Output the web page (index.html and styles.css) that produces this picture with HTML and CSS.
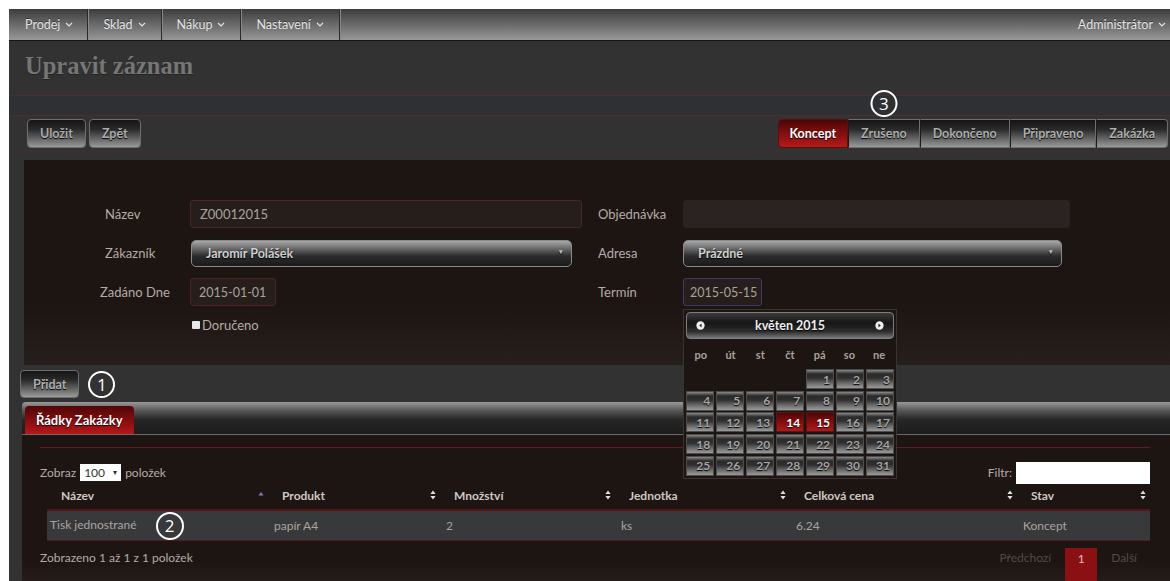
FILE: index.html
```html
<!DOCTYPE html>
<html lang="cs">
<head>
<meta charset="utf-8">
<title>Upravit záznam</title>
<link rel="stylesheet" href="styles.css">
</head>
<body>
<div class="app">
  <nav class="topnav">
    <a class="nav-item">Prodej <svg class="chev" viewBox="0 0 8 5"><path d="M1 1l3 3 3-3"/></svg></a>
    <a class="nav-item">Sklad <svg class="chev" viewBox="0 0 8 5"><path d="M1 1l3 3 3-3"/></svg></a>
    <a class="nav-item">Nákup <svg class="chev" viewBox="0 0 8 5"><path d="M1 1l3 3 3-3"/></svg></a>
    <a class="nav-item">Nastavení <svg class="chev" viewBox="0 0 8 5"><path d="M1 1l3 3 3-3"/></svg></a>
    <a class="nav-item user">Administrátor <svg class="chev" viewBox="0 0 8 5"><path d="M1 1l3 3 3-3"/></svg></a>
  </nav>

  <header class="page-head"><h1>Upravit záznam</h1></header>
  <div class="band"></div>

  <div class="toolbar">
    <div class="btn-group">
      <button class="btn">Uložit</button>
      <button class="btn">Zpět</button>
    </div>
    <div class="status-group">
      <button class="btn seg active">Koncept</button>
      <button class="btn seg">Zrušeno<span class="marker marker-top">3</span></button>
      <button class="btn seg">Dokončeno</button>
      <button class="btn seg">Připraveno</button>
      <button class="btn seg">Zakázka</button>
    </div>
  </div>

  <div class="content">
    <section class="form-panel">
      <div class="form-grid">
        <label class="lbl">Název</label>
        <div class="field wide">Z00012015</div>
        <span></span>
        <label class="lbl">Objednávka</label>
        <div class="field wide plain"></div>

        <label class="lbl">Zákazník</label>
        <div class="select sel-left">Jaromír Polášek<span class="sel-arrow">▾</span></div>
        <span></span>
        <label class="lbl">Adresa</label>
        <div class="select sel-right">Prázdné<span class="sel-arrow">▾</span></div>

        <label class="lbl lbl-wide">Zadáno Dne</label>
        <div class="field date">2015-01-01</div>
        <span></span>
        <label class="lbl">Termín</label>
        <div class="date-wrap">
          <div class="field date focus">2015-05-15<span class="caret"></span></div>
          <div class="datepicker">
            <div class="dp-head">
              <svg class="dp-nav" viewBox="0 0 10 10"><circle cx="5" cy="5" r="4.6"/><path d="M6.2 2.8L3.6 5l2.6 2.2z"/></svg>
              <span>květen 2015</span>
              <svg class="dp-nav" viewBox="0 0 10 10"><circle cx="5" cy="5" r="4.6"/><path d="M3.8 2.8L6.4 5 3.8 7.2z"/></svg>
            </div>
            <div class="dp-days">
              <span>po</span><span>út</span><span>st</span><span>čt</span><span>pá</span><span>so</span><span>ne</span>
            </div>
            <div class="dp-grid">
              <span class="empty"></span><span class="empty"></span><span class="empty"></span><span class="empty"></span>
              <span>1</span><span>2</span><span>3</span>
              <span>4</span><span>5</span><span>6</span><span>7</span><span>8</span><span>9</span><span>10</span>
              <span>11</span><span>12</span><span>13</span><span class="hl">14</span><span class="hl">15</span><span>16</span><span>17</span>
              <span>18</span><span>19</span><span>20</span><span>21</span><span>22</span><span>23</span><span>24</span>
              <span>25</span><span>26</span><span>27</span><span>28</span><span>29</span><span>30</span><span>31</span>
            </div>
          </div>
        </div>

        <span></span>
        <div class="check"><span class="box"></span>Doručeno</div>
      </div>
    </section>

    <div class="add-row">
      <button class="btn">Přidat</button>
      <span class="marker">1</span>
    </div>

    <section class="tabs">
      <div class="tabbar">
        <div class="tab active">Řádky Zakázky</div>
      </div>
      <div class="tab-body">
        <div class="dt-top">
          <div class="dt-length">Zobraz <span class="mini-select">100<span class="mini-arrow">▾</span></span> položek</div>
          <div class="dt-filter">Filtr: <span class="filter-box"></span></div>
        </div>
        <table class="grid">
          <colgroup>
            <col style="width:221px"><col style="width:172px"><col style="width:175px">
            <col style="width:175px"><col style="width:227px"><col style="width:133px">
          </colgroup>
          <thead>
            <tr>
              <th>Název<svg class="sort asc" viewBox="0 0 6 10"><path d="M3 2l2.6 3.4H.4z"/></svg></th>
              <th>Produkt<svg class="sort" viewBox="0 0 6 10"><path d="M3 .6l2.6 3.4H.4zM3 9.4L.4 6h5.2z"/></svg></th>
              <th>Množství<svg class="sort" viewBox="0 0 6 10"><path d="M3 .6l2.6 3.4H.4zM3 9.4L.4 6h5.2z"/></svg></th>
              <th>Jednotka<svg class="sort" viewBox="0 0 6 10"><path d="M3 .6l2.6 3.4H.4zM3 9.4L.4 6h5.2z"/></svg></th>
              <th>Celková cena<svg class="sort" viewBox="0 0 6 10"><path d="M3 .6l2.6 3.4H.4zM3 9.4L.4 6h5.2z"/></svg></th>
              <th>Stav<svg class="sort" viewBox="0 0 6 10"><path d="M3 .6l2.6 3.4H.4zM3 9.4L.4 6h5.2z"/></svg></th>
            </tr>
          </thead>
          <tbody>
            <tr>
              <td>Tisk jednostrané<span class="marker inline">2</span></td>
              <td>papír A4</td>
              <td>2</td>
              <td>ks</td>
              <td>6.24</td>
              <td>Koncept</td>
            </tr>
          </tbody>
        </table>
        <div class="dt-bottom">
          <div class="dt-info">Zobrazeno 1 až 1 z 1 položek</div>
          <div class="pager">
            <span class="pg">Předchozí</span>
            <span class="pg current">1</span>
            <span class="pg">Další</span>
          </div>
        </div>
      </div>
    </section>
  </div>
</div>
</body>
</html>
```

FILE: styles.css
```css
* { box-sizing: border-box; }

html, body {
  margin: 0;
  height: 100%;
  overflow: hidden;
  background: #fff;
}

body {
  padding: 9px 0 0 9px;
  font-family: Lato, "Open Sans", sans-serif;
  font-size: 13px;
  color: #b0aaa6;
}

.app {
  background: #323232;
  min-height: 100%;
}

/* top navigation */
.topnav {
  display: flex;
  height: 32px;
  background: linear-gradient(#3c3c3c, #666 45%, #979797);
  border-bottom: 1px solid #151515;
}

.nav-item {
  display: flex;
  align-items: center;
  gap: 5px;
  padding: 0 15px;
  color: #e4e4e4;
  text-shadow: 0 -1px 0 rgba(0,0,0,.45);
  border-right: 1px solid #2a2a2a;
  box-shadow: 1px 0 0 #8a8a8a;
  font-size: 12.5px;
}
.nav-item:first-child { padding-left: 16px; padding-right: 14px; }
.nav-item.user {
  margin-left: auto;
  border-right: 0;
  box-shadow: none;
  padding-right: 4px;
}

.chev {
  width: 8px;
  height: 5px;
  fill: none;
  stroke: #e4e4e4;
  stroke-width: 1.2;
}

/* page title */
.page-head { height: 54px; }
.page-head h1 {
  margin: 0;
  padding: 11px 0 0 16px;
  font-family: "Liberation Serif", serif;
  font-weight: bold;
  font-size: 24.5px;
  color: #767676;
  text-shadow: 0 1px 0 #222;
}

.band {
  height: 21px;
  background: #2e3033;
  border-top: 1px solid #4a2e32;
  border-bottom: 1px solid #4a2e32;
}

/* action toolbar */
.toolbar {
  display: flex;
  justify-content: space-between;
  align-items: flex-start;
  height: 35px;
  padding: 3px 2px 0 18px;
  border-bottom: 1px solid #452b2e;
}

.btn-group, .status-group { display: flex; }
.btn-group { gap: 3px; }

.btn {
  position: relative;
  height: 29px;
  padding: 0 12px;
  font-family: Lato, sans-serif;
  font-weight: 700;
  font-size: 12.5px;
  color: #adadad;
  text-shadow: 0 1px 1px #000;
  background: linear-gradient(#151515, #2a2a2a 35%, #777 80%, #9a9a9a);
  border: 1px solid #6e6e6e;
  border-radius: 4px;
}

.seg {
  border-radius: 0;
  border-left-color: #1a1a1a;
  padding: 0 12px;
}
.seg:first-child { border-radius: 4px 0 0 4px; border-left-color: #6e6e6e; padding: 0 11px; }
.seg:last-child { border-radius: 0 4px 4px 0; }
.seg.active {
  color: #fff;
  background: linear-gradient(#4a0606, #8a0f10 55%, #b51a1a);
  border-color: #5a1010;
}

/* numbered callouts */
.marker {
  display: inline-flex;
  align-items: center;
  justify-content: center;
  width: 27px;
  height: 27px;
  border: 2.5px solid #fff;
  border-radius: 50%;
  color: #fff;
  font-family: "Open Sans", sans-serif;
  font-weight: 400;
  font-size: 17px;
  line-height: 1;
  text-shadow: none;
}
.marker-top {
  position: absolute;
  left: 50%;
  top: -30px;
  transform: translateX(-50%);
}

.content { padding-left: 13px; }

/* edit form */
.form-panel {
  margin: 9px 0 0 2px;
  padding: 40px 0 32px 79px;
  background: linear-gradient(#1d1512 70%, #271f1b);
}

.form-grid {
  display: grid;
  grid-template-columns: 87px 392px 16px 85px 387px;
  grid-template-rows: 28px 28px 28px 16px;
  row-gap: 11px;
  align-items: center;
}
.form-grid > :nth-child(1),
.form-grid > :nth-child(6) { padding-left: 2px; }
.lbl-wide { margin-left: -3px; }

.lbl { color: #b3aca7; font-size: 13px; white-space: nowrap; }

.field {
  height: 28px;
  display: flex;
  align-items: center;
  padding: 0 9px;
  background: #261e1b;
  border: 1px solid #4b2620;
  border-radius: 3px;
  color: #a8a29e;
  font-size: 13px;
  white-space: nowrap;
}
.field.plain { border-color: #2a2220; background: #2a2321; }
.field.date { width: 86px; padding: 0 8px; font-size: 12.5px; }
.date-wrap .field.date { width: 79px; padding: 0 6px; }
.field.focus { border-color: #3d3a6a; }
.caret {
  display: inline-block;
  width: 1px;
  height: 16px;
  background: #ccc;
}

.select {
  position: relative;
  height: 27px;
  display: flex;
  align-items: center;
  padding: 0 14px;
  font-weight: 700;
  font-size: 12.5px;
  color: #d0d0d0;
  text-shadow: 0 1px 1px #000;
  background: linear-gradient(#a8a8a8, #6a6a6a 30%, #2c2c2c 60%, #1a1a1a);
  border: 1px solid #8a8a8a;
  border-radius: 5px;
}
.sel-left { width: 381px; margin-left: 1px; }
.sel-right { width: 379px; }
.sel-arrow {
  position: absolute;
  right: 8px;
  top: 6px;
  font-size: 7px;
  color: #bbb;
}

.date-wrap { position: relative; }

.check {
  display: flex;
  align-items: center;
  gap: 2px;
  margin-left: 2px;
  font-size: 13px;
  color: #b3aca7;
  height: 16px;
}
.check .box {
  width: 8px;
  height: 8px;
  background: #e8e8e8;
  border-radius: 1px;
}

/* date picker */
.datepicker {
  position: absolute;
  left: 0;
  top: 31px;
  z-index: 5;
  width: 214px;
  height: 170px;
  padding: 2px;
  background: #1d1512;
  border: 1px solid #3a3330;
}

.dp-head {
  display: flex;
  align-items: center;
  justify-content: space-between;
  height: 27px;
  padding: 0 9px;
  font-weight: 700;
  font-size: 12.5px;
  color: #eee;
  text-shadow: 0 1px 1px #000;
  background: linear-gradient(#3a3a3a, #161616 40%, #2e2e2e 75%, #777);
  border: 1px solid #7d7d7d;
  border-radius: 4px;
}
.dp-nav { width: 9px; height: 9px; }
.dp-nav circle { fill: #f0f0f0; }
.dp-nav path { fill: #222; }

.dp-days {
  display: grid;
  grid-template-columns: repeat(7, 1fr);
  height: 30px;
  align-items: center;
  text-align: center;
  font-weight: 700;
  font-size: 11px;
  color: #a9a29d;
}

.dp-grid {
  display: grid;
  grid-template-columns: repeat(7, 1fr);
  grid-auto-rows: 20px;
  gap: 1.7px;
}
.dp-grid span {
  display: flex;
  align-items: center;
  justify-content: flex-end;
  padding-right: 3px;
  font-weight: 700;
  font-size: 12px;
  color: #a6a6a6;
  text-shadow: 0 1px 1px #000;
  background: linear-gradient(#8a8a8a, #2a2a2a 22%, #303030 45%, #6e6e6e 75%, #9a9a9a);
  border: 1px solid #4c4c4c;
}
.dp-grid span.empty { background: none; border: 0; }
.dp-grid span.hl {
  color: #fff;
  background: linear-gradient(#4d0707, #8a0e10 55%, #b01a1a);
  border-color: #5a1414;
}

/* add button row */
.add-row {
  display: flex;
  align-items: center;
  gap: 9px;
  height: 37px;
  margin-left: -2px;
  padding-top: 1px;
}
.add-row .btn { height: 28px; padding: 0 12px; }

/* tabs */
.tabbar {
  height: 33px;
  display: flex;
  align-items: flex-end;
  padding-left: 3px;
  background: linear-gradient(#9a9a9a, #5a5a5a 25%, #262626 55%, #1c1c1c);
  border-bottom: 1px solid #6a6a6a;
  border-radius: 4px 0 0 0;
}
.tab {
  height: 28px;
  display: flex;
  align-items: center;
  padding: 0 11px;
  font-weight: 700;
  font-size: 13px;
  color: #fff;
  text-shadow: 0 1px 1px #000;
  background: linear-gradient(#4e0606, #8a0d0f 55%, #b3191a);
  border-radius: 4px 4px 0 0;
}

.tab-body {
  padding: 12px 20px 20px 18px;
  background: linear-gradient(#1d1512 75%, #2c2420);
}

.dt-top {
  display: flex;
  justify-content: space-between;
  align-items: center;
  padding-top: 14px;
  border-top: 1px solid #6a1a1c;
  height: 36px;
  font-size: 12px;
}
.dt-length { display: flex; align-items: center; gap: 4px; color: #b3aca7; }
.mini-select {
  position: relative;
  width: 41px;
  height: 17px;
  padding-left: 4px;
  background: #fff;
  color: #333;
  font-size: 12px;
  line-height: 17px;
}
.mini-arrow {
  position: absolute;
  right: 4px;
  top: 0;
  font-size: 8px;
}
.dt-filter { display: flex; align-items: center; gap: 4px; color: #b3aca7; }
.filter-box {
  width: 134px;
  height: 22px;
  background: #fff;
}

.grid {
  width: 1103px;
  margin-left: 7px;
  border-collapse: collapse;
  table-layout: fixed;
  font-size: 12px;
}
.grid th {
  position: relative;
  height: 27px;
  padding: 0 0 2px 14px;
  text-align: left;
  font-weight: 700;
  font-size: 12px;
  color: #cfc8c3;
  border-bottom: 2px solid #5a1212;
}
.sort {
  position: absolute;
  right: 4px;
  top: 7px;
  width: 6px;
  height: 10px;
  fill: #e0e0e0;
}
.sort.asc { fill: #7e7ec0; }
.grid td {
  height: 30px;
  padding: 0 0 0 6px;
  background: #37393b;
  color: #aaa4a0;
  border-bottom: 1px solid #4e1a1a;
}
.grid td:first-child { padding-left: 3px; }
.marker.inline {
  width: 28px;
  height: 28px;
  margin: -6px 0 -6px 19px;
  vertical-align: middle;
}

.dt-bottom {
  display: flex;
  justify-content: space-between;
  align-items: flex-start;
  padding-top: 7px;
  font-size: 12px;
}
.dt-info { padding-top: 2px; color: #b3aca7; }
.pager { display: flex; margin-right: 3px; }
.pg { padding: 2px 10px; color: #554a45; }
.pg.current {
  height: 34px;
  width: 32px;
  margin: 0 4px;
  padding-top: 3px;
  text-align: center;
  color: #e0c0c0;
  background: #8a1014;
}
```
